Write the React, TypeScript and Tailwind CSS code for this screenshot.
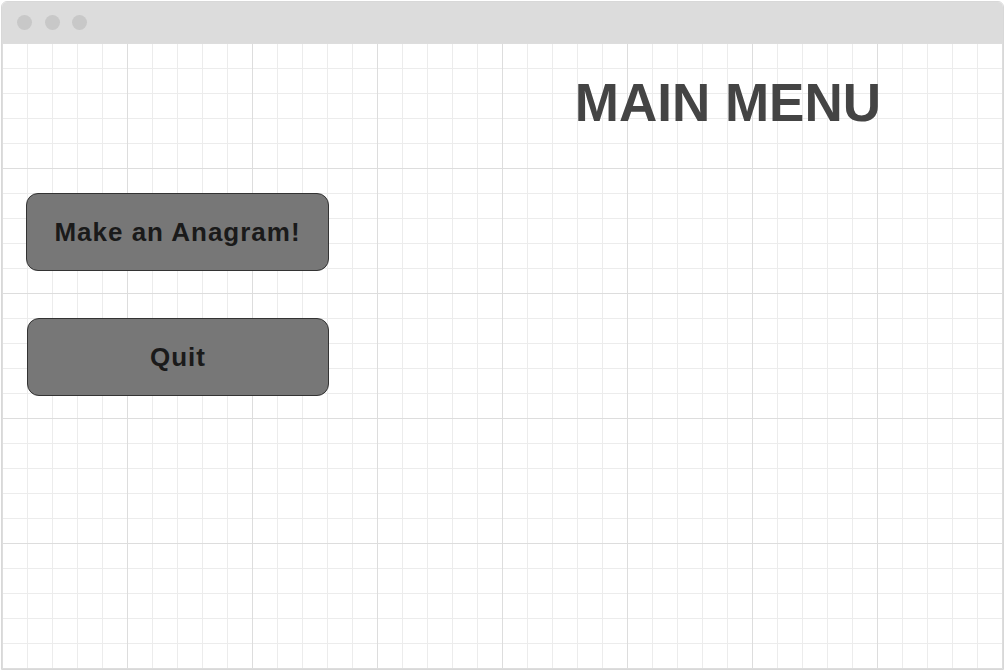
import React from 'react';

const App = () => {
  return (
    <div className="w-[1005px] h-[671px] bg-white pl-px pt-px font-['Liberation_Sans',Arial,sans-serif]">
      <div className="w-[1003px] h-[669px] flex flex-col border border-[#d8d8d8] rounded-t-[6px] overflow-hidden">
        <div className="h-[41px] shrink-0 bg-[#dcdcdc] flex items-center gap-[12.5px] pl-[15px]">
          <span className="w-[15px] h-[15px] rounded-full bg-[#c8c8c8]" />
          <span className="w-[15px] h-[15px] rounded-full bg-[#c8c8c8]" />
          <span className="w-[15px] h-[15px] rounded-full bg-[#c8c8c8]" />
        </div>
        <div className="flex-1 flex flex-col bg-white bg-[linear-gradient(to_right,#dddddd_1px,transparent_1px),linear-gradient(to_bottom,#dddddd_1px,transparent_1px),linear-gradient(to_right,#ececec_1px,transparent_1px),linear-gradient(to_bottom,#ececec_1px,transparent_1px)] bg-[size:125px_125px,125px_125px,25px_25px,25px_25px]">
          <div className="flex justify-end pr-[122px] pt-[33px]">
            <h1 className="text-[53px] leading-none font-bold text-[#444444]">MAIN MENU</h1>
          </div>
          <div className="flex flex-col gap-[47px] mt-[64px]">
            <button className="ml-[24px] w-[303px] h-[78px] rounded-[12px] border border-[#333333] bg-[#777777] text-[26px] font-bold tracking-[1px] text-[#1a1a1a]">
              Make an Anagram!
            </button>
            <button className="ml-[25px] w-[302px] h-[78px] rounded-[12px] border border-[#333333] bg-[#777777] text-[26px] font-bold tracking-[1px] text-[#1a1a1a]">
              Quit
            </button>
          </div>
        </div>
      </div>
    </div>
  );
};

export default App;
